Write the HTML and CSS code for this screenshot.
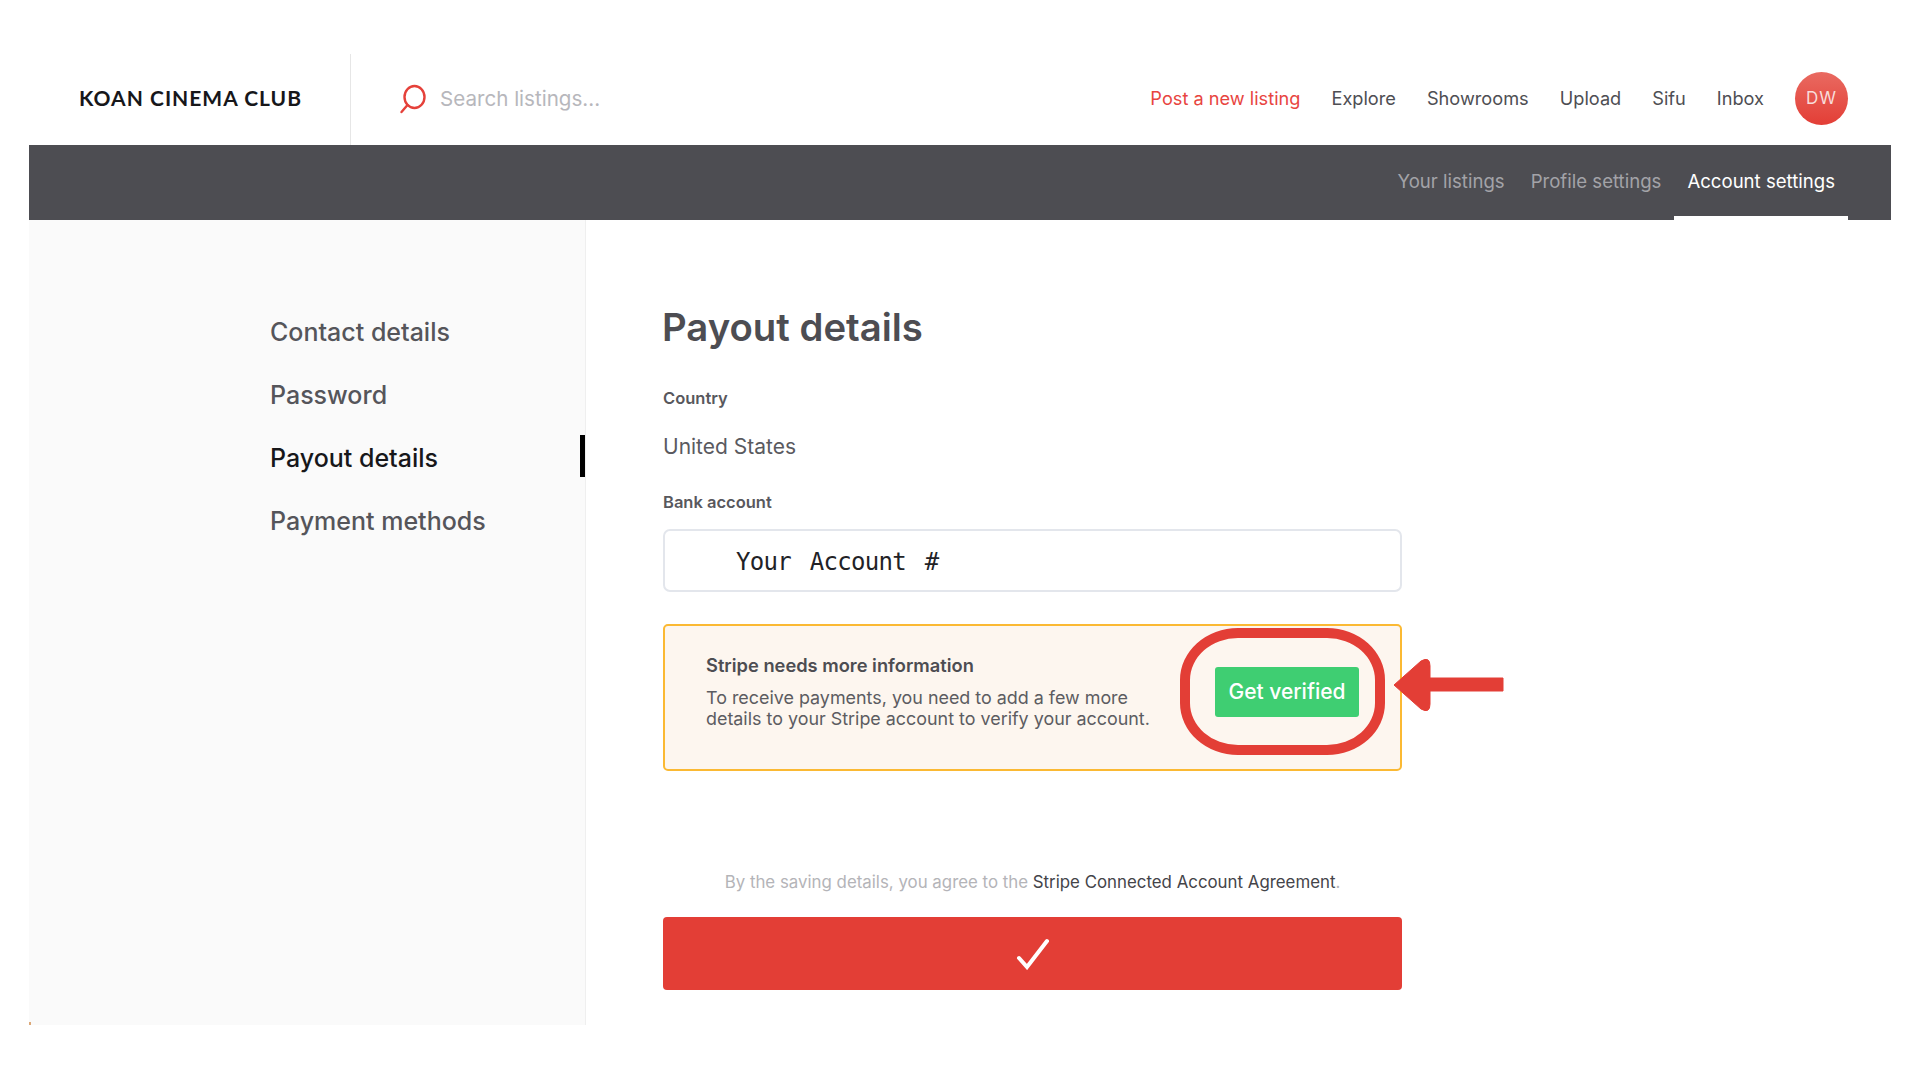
FILE: index.html
```html
<!DOCTYPE html>
<html lang="en">
<head>
    <meta charset="UTF-8">
    <meta name="viewport" content="width=device-width, initial-scale=1.0">
    <title>Payout details - Koan Cinema Club</title>
    <link rel="stylesheet" href="styles.css">
</head>
<body>
    <div class="page">
        <header class="topbar">
            <div class="logo">KOAN CINEMA CLUB</div>
            <div class="search">
                <svg class="search-icon" width="30" height="30" viewBox="0 0 30 30" fill="none" stroke="#e5413a" stroke-width="2.4" stroke-linecap="round">
                    <ellipse cx="16.5" cy="13" rx="10" ry="11"/>
                    <path d="M9.5 21 L3.5 28"/>
                </svg>
                <span class="search-text">Search listings...</span>
            </div>
            <nav class="main-nav">
                <a class="post-link">Post a new listing</a>
                <a>Explore</a>
                <a>Showrooms</a>
                <a>Upload</a>
                <a>Sifu</a>
                <a>Inbox</a>
                <span class="avatar">DW</span>
            </nav>
        </header>

        <div class="subbar">
            <a class="sub-link">Your listings</a>
            <a class="sub-link">Profile settings</a>
            <a class="sub-link active">Account settings</a>
        </div>

        <div class="content">
            <aside class="sidebar">
                <a>Contact details</a>
                <a>Password</a>
                <a class="active">Payout details</a>
                <a>Payment methods</a>
            </aside>

            <main class="panel">
                <h1>Payout details</h1>
                <label class="field-label">Country</label>
                <div class="country">United States</div>
                <label class="field-label bank-label">Bank account</label>
                <div class="account-input">Your Account #</div>

                <div class="alert">
                    <div class="alert-text">
                        <h2>Stripe needs more information</h2>
                        <p>To receive payments, you need to add a few more<br>details to your Stripe account to verify your account.</p>
                    </div>
                    <button class="verify-btn">Get verified</button>
                    <span class="ring"></span>
                    <svg class="arrow" width="112" height="54" viewBox="0 0 112 54">
                        <path d="M2 27 L29 3 Q38 -2 38 8 L38 20 L111 20 L111 33 L38 33 L38 46 Q38 56 29 51 Z" fill="#e33e36" stroke="#e33e36" stroke-width="1" stroke-linejoin="round"/>
                    </svg>
                </div>

                <p class="terms">By the saving details, you agree to the <a>Stripe Connected Account Agreement</a>.</p>
                <button class="save-btn">
                    <svg width="34" height="32" viewBox="0 0 34 32" fill="none" stroke="#fff" stroke-width="4" stroke-linecap="round">
                        <path d="M3 20 L11 29 L31 3"/>
                    </svg>
                </button>
            </main>
        </div>
    </div>
</body>
</html>
```

FILE: styles.css
```css
* {
    margin: 0;
    padding: 0;
    box-sizing: border-box;
    font-family: 'Inter', 'Liberation Sans', sans-serif;
}

body {
    background: white;
    min-height: 100vh;
}

.page {
    width: 1862px;
    margin-left: 29px;
    padding-top: 54px;
}

/* top bar */
.topbar {
    display: flex;
    align-items: center;
    height: 91px;
}

.logo {
    width: 322px;
    height: 100%;
    padding-left: 50px;
    line-height: 88px;
    border-right: 1px solid #e6e6e6;
    font-family: 'Lato', sans-serif;
    font-size: 21px;
    font-weight: 700;
    letter-spacing: 1px;
    color: #17171a;
}

.search {
    display: flex;
    align-items: center;
    margin-left: 47px;
    margin-top: -2px;
}

.search-text {
    margin-left: 12px;
    font-size: 20.6px;
    color: #b7b7bc;
}

.main-nav {
    display: flex;
    align-items: center;
    gap: 31px;
    margin-left: auto;
    margin-right: 43px;
    margin-top: -3px;
    font-size: 18.2px;
    color: #4e4e53;
}

.post-link {
    color: #e8453f;
}

.avatar {
    display: flex;
    align-items: center;
    justify-content: center;
    width: 53px;
    height: 53px;
    border-radius: 50%;
    background: linear-gradient(180deg, #e96a61 0%, #e33e36 100%);
    color: #f8dcda;
    font-size: 17px;
    letter-spacing: 1px;
}

/* dark bar */
.subbar {
    display: flex;
    justify-content: flex-end;
    height: 75px;
    padding-right: 43px;
    background: #4d4d52;
}

.sub-link {
    padding: 0 13px;
    line-height: 73px;
    font-size: 18.6px;
    color: #a3a3a8;
}

.sub-link.active {
    color: white;
    border-bottom: 4px solid white;
}

/* body */
.content {
    display: flex;
    height: 805px;
}

.sidebar {
    position: relative;
    display: flex;
    flex-direction: column;
    width: 557px;
    padding-top: 81px;
    background: #fafafa;
    border-right: 1px solid #efefef;
}

/* small orange speck at the bottom corner */
.sidebar::after {
    content: "";
    position: absolute;
    left: 0;
    bottom: 0;
    width: 2px;
    height: 3px;
    background: #dca878;
}

.sidebar a {
    height: 63px;
    padding-left: 241px;
    line-height: 62px;
    font-size: 25px;
    font-weight: 500;
    color: #55555a;
}

.sidebar a.active {
    position: relative;
    color: #17171a;
}

.sidebar a.active::after {
    content: "";
    position: absolute;
    right: 0;
    top: 8px;
    width: 5px;
    height: 42px;
    background: black;
}

.panel {
    width: 739px;
    margin-left: 77px;
    color: #4d4d52;
}

h1 {
    margin-top: 84px;
    margin-left: -1px;
    font-size: 38.3px;
    line-height: 46px;
    font-weight: 600;
}

.field-label {
    display: block;
    font-size: 16.5px;
    font-weight: 600;
    line-height: 20px;
    margin-top: 38px;
    color: #58585d;
}

.country {
    margin-top: 26px;
    font-size: 21px;
    line-height: 26px;
    color: #5a5a5f;
}

.bank-label {
    margin-top: 32px;
}

.account-input {
    height: 63px;
    margin-top: 17px;
    padding-left: 71px;
    border: 2px solid #e3e6ec;
    border-radius: 7px;
    font-family: 'DejaVu Sans Mono', monospace;
    font-size: 24px;
    line-height: 63px;
    word-spacing: 5px;
    letter-spacing: -0.7px;
    color: #222226;
    background: white;
}

.alert {
    position: relative;
    display: flex;
    align-items: center;
    height: 147px;
    margin-top: 32px;
    padding-left: 41px;
    background: #fdf6ef;
    border: 2px solid #fbb933;
    border-radius: 5px;
}

.alert h2 {
    margin-top: -1px;
    font-size: 18.3px;
    line-height: 24px;
    font-weight: 600;
    color: #4d4d52;
}

.alert p {
    margin-top: 10px;
    font-size: 17.9px;
    line-height: 21px;
    color: #5c5c61;
}

.alert-text {
    margin-top: -12px;
}

.verify-btn {
    margin-left: auto;
    margin-right: 41px;
    margin-top: -12px;
    width: 144px;
    height: 50px;
    border: none;
    border-radius: 3px;
    background: #3fce72;
    color: white;
    font-size: 21px;
    font-weight: 500;
}

/* annotation drawn over the alert */
.ring {
    position: absolute;
    left: 515px;
    top: 2px;
    width: 205px;
    height: 127px;
    border: 10px solid #e33e36;
    border-radius: 58px / 52px;
}

.arrow {
    position: absolute;
    left: 727px;
    top: 32px;
}

.terms {
    margin-top: 101px;
    text-align: center;
    font-size: 16.85px;
    line-height: 20px;
    color: #b4b4b8;
}

.terms a {
    color: #444449;
}

.save-btn {
    display: flex;
    align-items: center;
    justify-content: center;
    width: 100%;
    height: 73px;
    margin-top: 25px;
    border: none;
    border-radius: 4px;
    background: #e33e36;
}
```
